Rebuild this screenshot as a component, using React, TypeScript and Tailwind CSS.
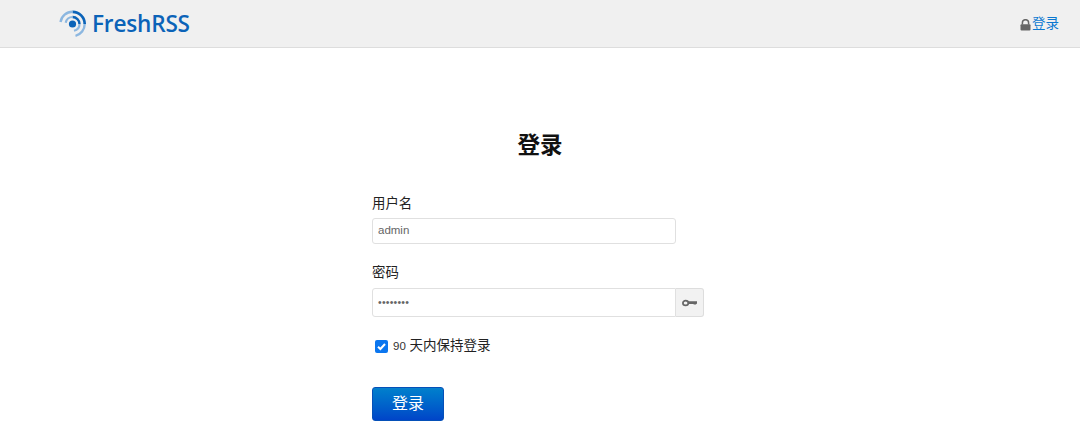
export default function App() {
  const sans = "font-['Liberation_Sans','Noto_Sans_CJK_SC',sans-serif]";
  return (
    <div className={`h-[448px] w-[1080px] overflow-hidden bg-white text-[13px] text-[#222] ${sans}`}>
      <header className="flex h-[48px] items-center justify-between border-b border-[#ddd] bg-[#f0f0f0] pl-[59px] pr-[21px]">
        <div className="flex items-center gap-[5px]">
          <svg width="28" height="30" viewBox="0 0 28 30" fill="none" strokeLinecap="butt" className="mt-[1px]">
            <circle cx="13.5" cy="15" r="3.6" fill="#0b63b8" />
            <path d="M13.5 8A7 7 0 0 1 20.5 15" stroke="#0b63b8" strokeWidth="2.4" />
            <path d="M20.5 15A7 7 0 0 1 15 21.8" stroke="#8cb7e0" strokeWidth="2.2" />
            <path d="M6.7 13.8A7 7 0 0 1 13.5 8" stroke="#8cb7e0" strokeWidth="2.2" />
            <path d="M13.5 2.8A12.2 12.2 0 0 1 25.7 15" stroke="#0b63b8" strokeWidth="2.7" />
            <path d="M25.7 15A12.2 12.2 0 0 1 16.5 26.8" stroke="#8cb7e0" strokeWidth="2.4" />
            <path d="M1.5 13A12.2 12.2 0 0 1 13.5 2.8" stroke="#8cb7e0" strokeWidth="2.4" />
          </svg>
          <span className="mt-[1px] font-['Open_Sans',sans-serif] text-[22.6px] font-semibold leading-none tracking-[-0.2px] text-[#0b63b8]">FreshRSS</span>
        </div>
        <div className="mt-[1px] flex items-center gap-[1px]">
          <svg width="11" height="12" viewBox="0 0 11 12" className="mt-[1px]">
            <path d="M2.4 5.5V3.8a3.1 3.1 0 0 1 6.2 0v1.7" stroke="#666" strokeWidth="1.5" fill="none" />
            <rect x="0.5" y="5.2" width="10" height="6.3" rx="1" fill="#666" />
          </svg>
          <a className="text-[13.5px] text-[#0b78d0]">登录</a>
        </div>
      </header>

      <main className="mx-auto w-[336px]">
        <h1 className="mt-[82px] text-center text-[22.5px] font-bold leading-[32px] text-[#111]">登录</h1>

        <label className="mt-[32px] block text-[13.4px] leading-[20px]">用户名</label>
        <div className="mt-[4px] flex h-[26px] w-[304px] items-center rounded-[3px] border border-[#e0e0e0] bg-white px-[5px] text-[11.5px] text-[#666]">admin</div>

        <label className="mt-[19px] block text-[13.4px] leading-[20px]">密码</label>
        <div className="mt-[5px] flex h-[29px]">
          <div className="flex w-[304px] items-center rounded-l-[3px] border border-[#e0e0e0] bg-white px-[5px] text-[10.5px] tracking-[0.2px] text-[#666]">••••••••</div>
          <div className="flex w-[28px] items-center justify-center rounded-r-[3px] border border-l-0 border-[#ddd] bg-[#f2f2f2]">
            <svg width="15" height="10" viewBox="0 0 15 10" fill="none">
              <ellipse cx="3.6" cy="5" rx="2.7" ry="2.4" stroke="#666" strokeWidth="1.7" />
              <path d="M6 3.2H15V5.4L13.8 6.6H12L11.2 5.9H6Z" fill="#666" />
            </svg>
          </div>
        </div>

        <div className="mt-[20px] flex h-[18px] items-center pl-[3px]">
          <span className="flex h-[13px] w-[13px] items-center justify-center rounded-[2px] bg-[#0b76ef]">
            <svg width="11" height="11" viewBox="0 0 11 11" fill="none">
              <path d="M2 5.7L4.4 8L9 3" stroke="#fff" strokeWidth="2" />
            </svg>
          </span>
          <span className="ml-[5px] text-[13.5px] leading-[18px]"><span className="text-[11.5px] text-[#333]">90</span> 天内保持登录</span>
        </div>

        <button className="mt-[32px] block h-[34px] w-[72px] rounded-[3px] border border-[#0550b8] bg-gradient-to-b from-[#0680cc] to-[#0044c8] text-[16px] text-white">登录</button>
      </main>
    </div>
  );
}
